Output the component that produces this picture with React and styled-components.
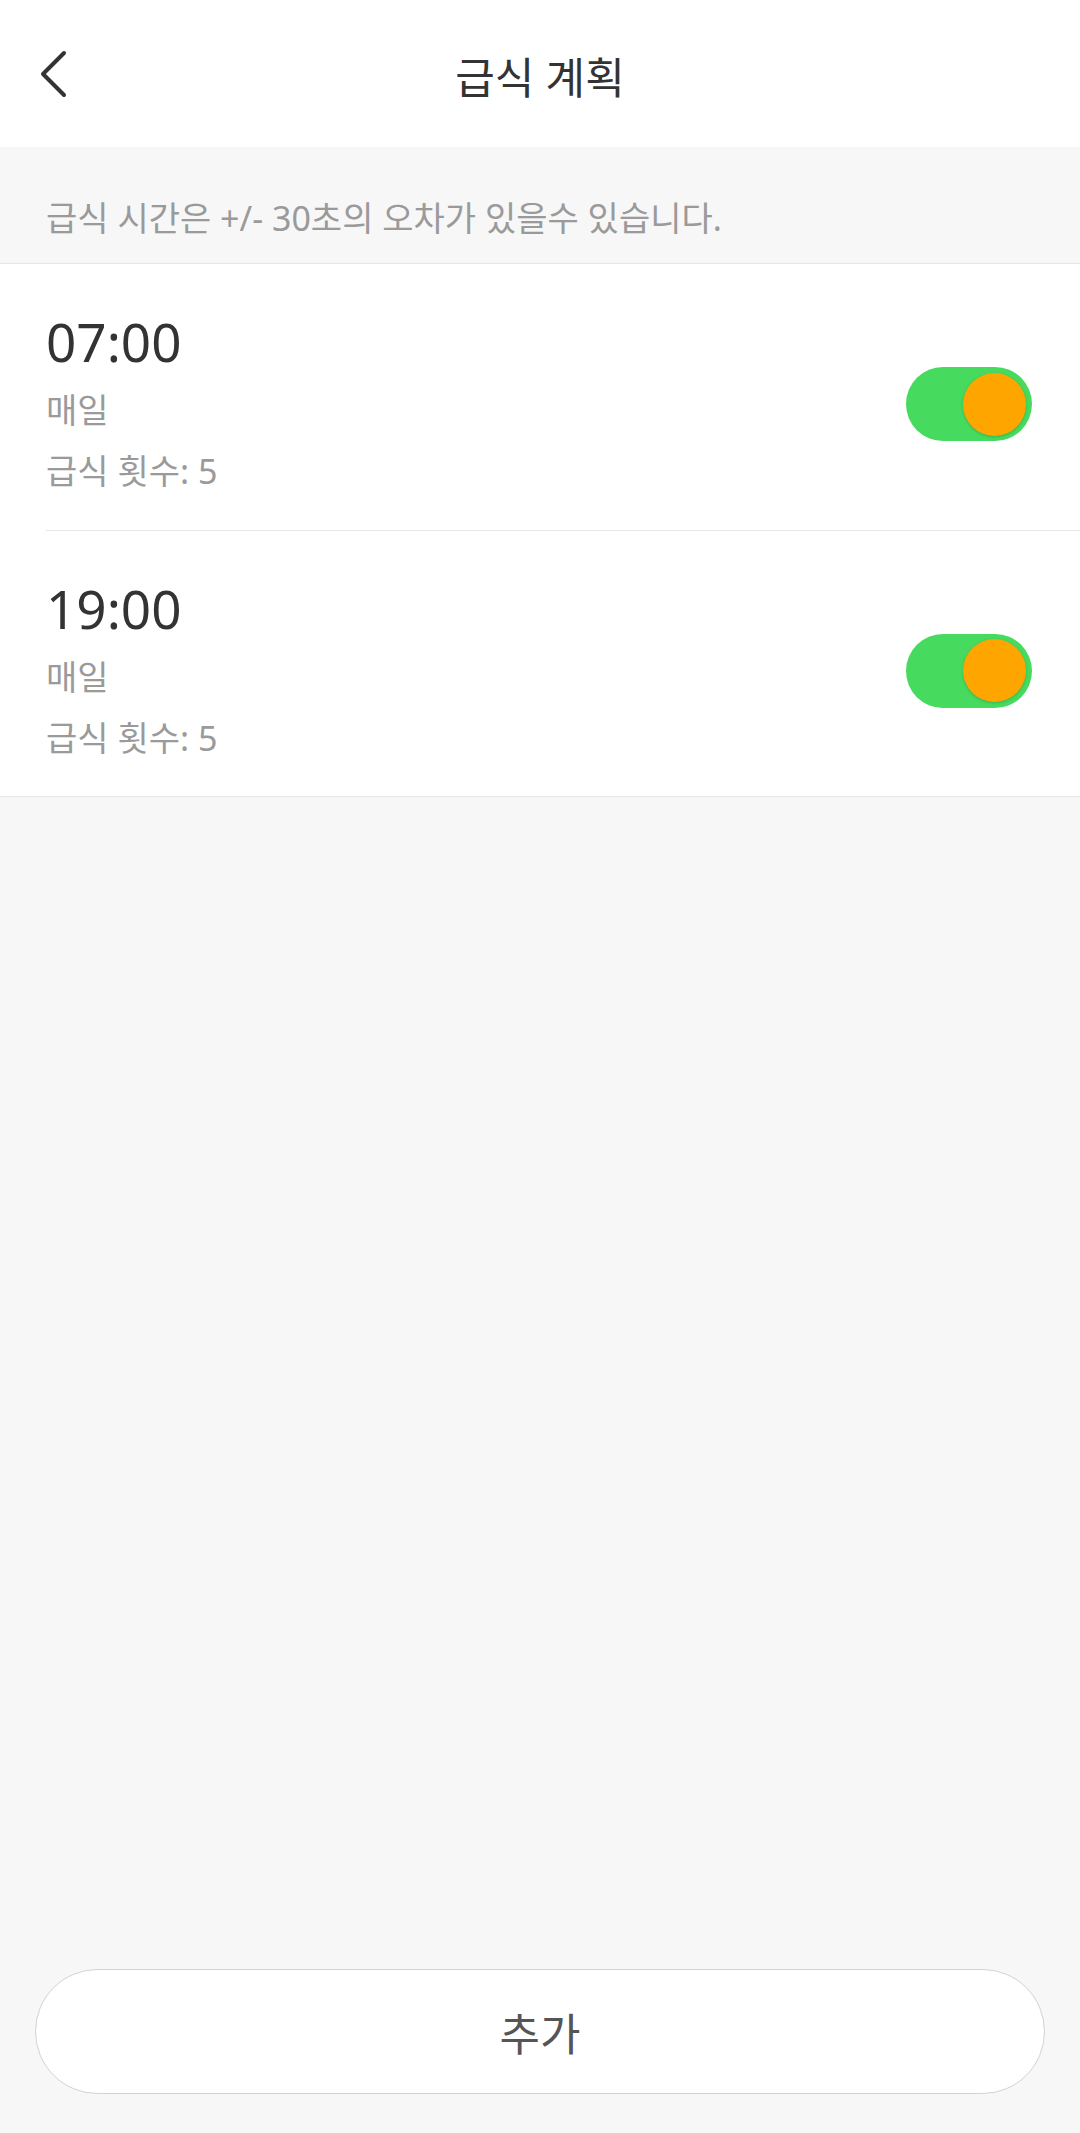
import React from 'react';
import styled, { createGlobalStyle } from 'styled-components';

const GlobalStyle = createGlobalStyle`
  html, body {
    margin: 0;
    padding: 0;
    background: #f7f7f7;
  }
  body {
    font-family: "Noto Sans", "Noto Sans CJK KR", sans-serif;
  }
`;

const Page = styled.div`
  min-height: 2133px;
  display: flex;
  flex-direction: column;
  background: #f7f7f7;
`;

const Header = styled.header`
  height: 147px;
  background: #fff;
  display: grid;
  grid-template-columns: 120px 1fr 120px;
  align-items: center;
`;

const BackButton = styled.button`
  border: 0;
  background: none;
  padding: 0 0 0 38px;
  height: 100%;
  display: flex;
  align-items: center;
  color: #333;
  cursor: pointer;
`;

const Title = styled.h1`
  margin: 0;
  text-align: center;
  font-size: 43px;
  font-weight: 400;
  color: #333;
  padding-top: 4px;
`;

const Notice = styled.div`
  height: 117px;
  box-sizing: border-box;
  padding: 52px 46px 0;
  border-bottom: 1px solid #e6e6e6;
  font-size: 34px;
  line-height: 38px;
  color: #9a9a9a;
`;

const List = styled.div`
  background: #fff;
  border-bottom: 1px solid #e6e6e6;
  padding-left: 46px;
`;

const Row = styled.div`
  height: 266px;
  box-sizing: border-box;
  display: flex;
  align-items: center;
  justify-content: space-between;
  padding-right: 48px;
  border-top: ${({ $first }) => ($first ? 'none' : '1px solid #e6e6e6')};
`;

const Info = styled.div`
  display: flex;
  flex-direction: column;
  padding-top: 12px;
`;

const Time = styled.div`
  font-size: 53px;
  line-height: 58px;
  color: #333;
`;

const Sub = styled.div`
  font-size: 34px;
  line-height: 44px;
  color: #9a9a9a;
  margin-top: ${({ $gap }) => $gap}px;
`;

const Track = styled.div`
  width: 126px;
  height: 74px;
  border-radius: 37px;
  background: ${({ $on }) => ($on ? '#46da5f' : '#e0e0e0')};
  display: flex;
  align-items: center;
  justify-content: ${({ $on }) => ($on ? 'flex-end' : 'flex-start')};
  padding: 0 6px;
  box-sizing: border-box;
  margin-top: 14px;
`;

const Knob = styled.div`
  width: 63px;
  height: 63px;
  border-radius: 50%;
  background: #ffa500;
  box-shadow: 0 1px 3px rgba(0, 0, 0, 0.18);
`;

const Spacer = styled.div`
  flex: 1;
`;

const Footer = styled.div`
  padding: 0 35px 39px;
`;

const AddButton = styled.button`
  width: 100%;
  height: 125px;
  border-radius: 63px;
  border: 1px solid #d2d2d2;
  background: #fff;
  font-family: "Noto Sans", "Noto Sans CJK KR", sans-serif;
  font-size: 44px;
  color: #555;
  cursor: pointer;
`;

const BackIcon = () => (
  <svg width="30" height="48" viewBox="0 0 30 48">
    <path d="M26 3 L5 24 L26 45" fill="none" stroke="currentColor" strokeWidth="4" strokeLinecap="round" strokeLinejoin="round" />
  </svg>
);

const Toggle = ({ on }) => (
  <Track $on={on}>
    <Knob />
  </Track>
);

const schedules = [
  { time: '07:00', repeat: '매일', count: 5, on: true },
  { time: '19:00', repeat: '매일', count: 5, on: true },
];

export default function App() {
  return (
    <Page>
      <GlobalStyle />
      <Header>
        <BackButton aria-label="back">
          <BackIcon />
        </BackButton>
        <Title>급식 계획</Title>
        <div />
      </Header>
      <Notice>급식 시간은 +/- 30초의 오차가 있을수 있습니다.</Notice>
      <List>
        {schedules.map((s, i) => (
          <Row key={s.time} $first={i === 0}>
            <Info>
              <Time>{s.time}</Time>
              <Sub $gap={17}>{s.repeat}</Sub>
              <Sub $gap={17}>급식 횟수: {s.count}</Sub>
            </Info>
            <Toggle on={s.on} />
          </Row>
        ))}
      </List>
      <Spacer />
      <Footer>
        <AddButton>추가</AddButton>
      </Footer>
    </Page>
  );
}
